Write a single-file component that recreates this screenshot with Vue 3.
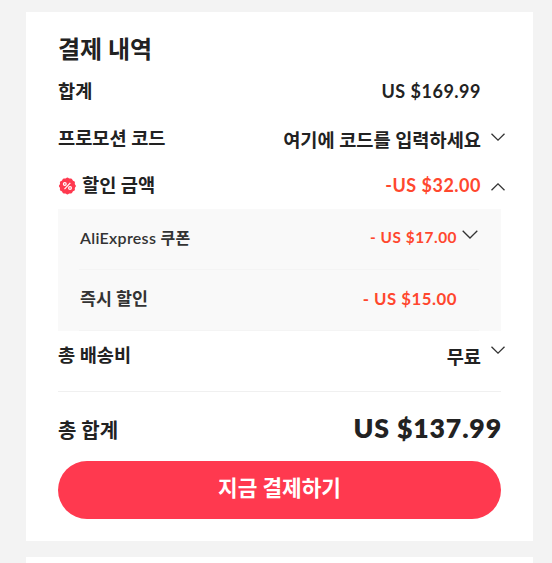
<template>
  <div class="checkout-page">
    <section class="summary-card">
      <h2 class="summary-title">결제 내역</h2>

      <div class="summary-row subtotal">
        <span class="label">합계</span>
        <span class="value price">US $169.99</span>
        <span class="arrow"></span>
      </div>

      <div class="summary-row promo">
        <span class="label">프로모션 코드</span>
        <span class="value">여기에 코드를 입력하세요</span>
        <svg class="arrow" viewBox="0 0 14 8"><path d="M0.5 0.7 7 7.1 13.5 0.7" /></svg>
      </div>

      <div class="summary-row discount" @click="showDiscounts = !showDiscounts">
        <svg class="badge" viewBox="0 0 18 18">
          <path class="seal" :d="sealPath" />
          <g class="percent">
            <circle cx="6.4" cy="7" r="1.4" />
            <circle cx="11.6" cy="11" r="1.4" />
            <path d="M11.9 5.9 6.1 12.1" />
          </g>
        </svg>
        <span class="label">할인 금액</span>
        <span class="value price sale">-US $32.00</span>
        <svg class="arrow" :class="{ down: !showDiscounts }" viewBox="0 0 14 8"><path d="M0.5 7.3 7 0.9 13.5 7.3" /></svg>
      </div>

      <div v-if="showDiscounts" class="discount-box">
        <div class="discount-item">
          <span class="item-label coupon">AliExpress 쿠폰</span>
          <span class="item-price coupon">- US $17.00</span>
          <svg class="item-arrow" viewBox="0 0 16 9"><path d="M0.7 0.8 8 8 15.3 0.8" /></svg>
        </div>
        <div class="discount-item">
          <span class="item-label">즉시 할인</span>
          <span class="item-price">- US $15.00</span>
          <span class="item-arrow"></span>
        </div>
      </div>

      <div class="summary-row shipping">
        <span class="label">총 배송비</span>
        <span class="value">무료</span>
        <svg class="arrow" viewBox="0 0 14 8"><path d="M0.5 0.7 7 7.1 13.5 0.7" /></svg>
      </div>

      <div class="total-row">
        <span class="total-label">총 합계</span>
        <span class="total-price">US $137.99</span>
      </div>

      <button class="pay-btn">지금 결제하기</button>
    </section>

    <section class="next-card"></section>
  </div>
</template>

<script setup>
import { ref } from 'vue'

const showDiscounts = ref(true)

// scalloped edge of the discount badge
const points = Array.from({ length: 72 }, (_, i) => {
  const angle = (i / 72) * Math.PI * 2
  const radius = 8.1 + 0.4 * Math.cos(angle * 12)
  return `${(9.4 + radius * Math.sin(angle)).toFixed(2)} ${(9 - radius * Math.cos(angle)).toFixed(2)}`
})
const sealPath = `M${points.join('L')}Z`
</script>

<style>
body {
  background: #f3f3f3;
}
</style>

<style scoped>
.checkout-page {
  box-sizing: border-box;
  height: 563px;
  padding: 12px 19px 0 26px;
  overflow: hidden;
  display: flex;
  flex-direction: column;
  gap: 16px;
  background: #f3f3f3;
  color: #222;
  font-family: Lato, "Noto Sans CJK KR", sans-serif;
  font-weight: 700;
}

.summary-card {
  box-sizing: border-box;
  height: 529px;
  flex-shrink: 0;
  padding: 20px 32px 22px;
  background: #fff;
}

.next-card {
  flex: 1;
  background: #fff;
}

.summary-title {
  margin: 0;
  height: 34px;
  line-height: 34px;
  font-size: 24px;
}

.summary-row {
  display: flex;
  align-items: center;
  height: 47px;
  margin-right: -4px;
  font-size: 18.67px;
  line-height: 28px;
  white-space: nowrap;
}

.subtotal {
  height: 49px;
}

.promo .label,
.discount .label,
.discount .value {
  padding-bottom: 2px;
}

.promo .value {
  padding-top: 2px;
}

.promo .arrow {
  margin-bottom: 3px;
}

.value {
  margin-left: auto;
}

.price {
  font-size: 18px;
  letter-spacing: 0.5px;
}

.sale,
.item-price {
  color: #ff472e;
}

.arrow {
  width: 14px;
  height: 8px;
  margin-left: 10px;
  flex-shrink: 0;
}

.arrow.down {
  transform: rotate(180deg);
}

.arrow path,
.item-arrow path {
  fill: none;
  stroke: #333;
  stroke-width: 1.3;
}

.badge {
  width: 18px;
  height: 18px;
  margin-right: 6px;
}

.discount .arrow {
  margin-top: 2px;
}

.seal {
  fill: #ff394f;
}

.percent {
  fill: none;
  stroke: #fff;
  stroke-width: 1.2;
  transform: translateX(0.4px);
}

.discount-box {
  box-sizing: border-box;
  height: 122px;
  padding: 0 22px 0 21px;
  background: #f9f9f9;
}

.discount-item {
  box-sizing: border-box;
  display: flex;
  align-items: center;
  height: 61px;
  padding-bottom: 4px;
  border-bottom: 1px solid #f4f4f4;
  font-size: 17.33px;
  color: #333;
}

.item-label {
  padding: 0 0 1px 1px;
}

.item-label.coupon {
  padding-bottom: 0;
  font-size: 16px;
  font-weight: 600;
  letter-spacing: 0.3px;
}

.item-price {
  margin-left: auto;
  font-size: 16.8px;
  letter-spacing: 0.5px;
}

.item-price.coupon {
  font-size: 15.4px;
}

.item-arrow {
  width: 16px;
  height: 9px;
  margin: 0 1px 5px 5px;
}

.shipping {
  height: 48px;
}

.shipping .value {
  padding-top: 3px;
}

.shipping .arrow {
  margin-bottom: 11px;
}

.total-row {
  box-sizing: border-box;
  height: 70px;
  margin-top: 12px;
  border-top: 1px solid #f0f0f0;
  display: flex;
  align-items: center;
  justify-content: space-between;
}

.total-label {
  padding-top: 6px;
  font-size: 20px;
}

.total-price {
  padding-top: 2px;
  margin-right: -1px;
  font-size: 26.67px;
  font-weight: 800;
  letter-spacing: 0.85px;
}

.pay-btn {
  display: block;
  width: 100%;
  height: 58px;
  padding: 0 0 7px;
  border: none;
  border-radius: 29px;
  background: #ff394f;
  color: #fff;
  font-family: inherit;
  font-size: 21.33px;
  font-weight: 700;
  cursor: pointer;
}
</style>
